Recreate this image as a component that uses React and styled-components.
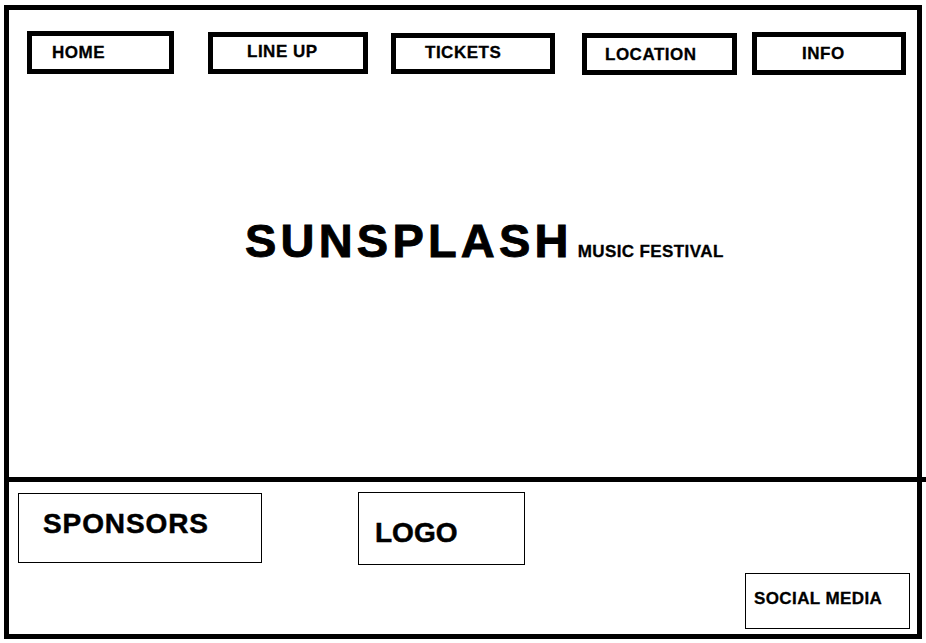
import React from 'react';
import styled, { createGlobalStyle } from 'styled-components';

const navItems = [
	{ label: 'HOME', w: 147, h: 43, ml: 18, mt: 21, pl: 20, pt: 8 },
	{ label: 'LINE UP', w: 160, h: 42, ml: 34, mt: 22, pl: 34, pt: 6 },
	{ label: 'TICKETS', w: 164, h: 41, ml: 23, mt: 23, pl: 29, pt: 6 },
	{ label: 'LOCATION', w: 155, h: 42, ml: 27, mt: 23, pl: 18, pt: 8 },
	{ label: 'INFO', w: 154, h: 43, ml: 15, mt: 22, pl: 45, pt: 8 },
];

function App() {
	return (
		<>
			<GlobalStyle />
			<Frame>
				<Hero>
					<NavRow>
						{navItems.map((item) => (
							<NavButton
								key={item.label}
								$w={item.w}
								$h={item.h}
								$ml={item.ml}
								$mt={item.mt}
								$pl={item.pl}
								$pt={item.pt}
							>
								{item.label}
							</NavButton>
						))}
					</NavRow>
					<TitleRow>
						<Title>SUNSPLASH</Title>
						<Subtitle>MUSIC FESTIVAL</Subtitle>
					</TitleRow>
				</Hero>
				<Footer>
					<FooterBox $w={244} $h={70} $ml={9} $mt={11} $pl={24} $pt={16} $size={28} $spacing={0.9}>
						SPONSORS
					</FooterBox>
					<FooterBox $w={167} $h={73} $ml={96} $mt={10} $pl={16} $pt={26} $size={28}>
						LOGO
					</FooterBox>
					<SocialBox>SOCIAL MEDIA</SocialBox>
				</Footer>
			</Frame>
		</>
	);
}

const GlobalStyle = createGlobalStyle`
	* {
		box-sizing: border-box;
	}

	body {
		margin: 0;
		background: #fff;
		color: #000;
		font-family: "Liberation Sans", Arial, sans-serif;
	}
`;

/* Outer wireframe */
const Frame = styled.div`
	margin: 5px 0 0 4px;
	width: 918px;
	height: 634px;
	border: 5px solid #000;
	display: flex;
	flex-direction: column;
`;

const Hero = styled.div`
	height: 472px;
	margin-right: -9px;
	border-bottom: 5px solid #000;
	display: flex;
	flex-direction: column;
`;

const NavRow = styled.nav`
	display: flex;
	align-items: flex-start;
`;

const NavButton = styled.div`
	width: ${(p) => p.$w}px;
	height: ${(p) => p.$h}px;
	margin-left: ${(p) => p.$ml}px;
	margin-top: ${(p) => p.$mt}px;
	padding: ${(p) => p.$pt}px 0 0 ${(p) => p.$pl}px;
	border: 5px solid #000;
	font-size: 17px;
	font-weight: 700;
	letter-spacing: 0.5px;
	line-height: 1;
	white-space: nowrap;
	-webkit-text-stroke: 0.3px #000;
`;

const TitleRow = styled.div`
	display: flex;
	align-items: baseline;
	margin: 142px 0 0 236px;
	line-height: 1;
`;

const Title = styled.span`
	font-size: 47px;
	font-weight: 700;
	letter-spacing: 4.2px;
	-webkit-text-stroke: 0.9px #000;
`;

const Subtitle = styled.span`
	margin-left: 5px;
	font-size: 17px;
	font-weight: 700;
	letter-spacing: 0.4px;
	-webkit-text-stroke: 0.3px #000;
`;

/* Bottom section */
const Footer = styled.div`
	flex: 1;
	display: flex;
	align-items: flex-start;
`;

const FooterBox = styled.div`
	width: ${(p) => p.$w}px;
	height: ${(p) => p.$h}px;
	margin-left: ${(p) => p.$ml}px;
	margin-top: ${(p) => p.$mt}px;
	padding: ${(p) => p.$pt}px 0 0 ${(p) => p.$pl}px;
	border: 1px solid #000;
	font-size: ${(p) => p.$size}px;
	font-weight: 700;
	letter-spacing: ${(p) => p.$spacing || 0}px;
	line-height: 1;
	white-space: nowrap;
	-webkit-text-stroke: 0.5px #000;
`;

const SocialBox = styled.div`
	align-self: flex-end;
	width: 165px;
	height: 56px;
	margin: 0 7px 5px auto;
	padding: 16px 0 0 8px;
	border: 1px solid #000;
	font-size: 17px;
	font-weight: 700;
	letter-spacing: 0.4px;
	line-height: 1;
	white-space: nowrap;
	-webkit-text-stroke: 0.3px #000;
`;

export default App;
